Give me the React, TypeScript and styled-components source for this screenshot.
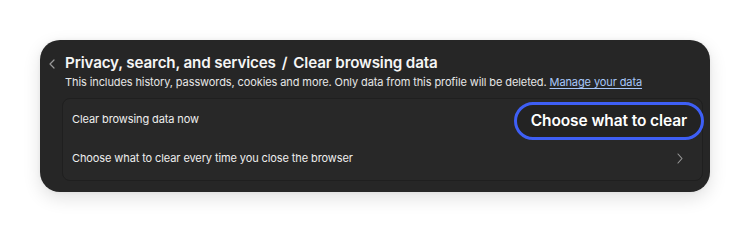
import React from 'react'
import styled, { createGlobalStyle } from 'styled-components'

const GlobalStyle = createGlobalStyle`
  html, body {
    margin: 0;
    padding: 0;
    background: #ffffff;
    font-family: Inter, "Liberation Sans", Arial, sans-serif;
    -webkit-font-smoothing: antialiased;
  }
`

const Page = styled.div`
  padding: 40px;
  width: 670px;
`

const Panel = styled.section`
  background: #262626;
  border-radius: 20px;
  height: 152px;
  box-sizing: border-box;
  padding: 13px 7px 0 8px;
  box-shadow: 0 6px 18px rgba(0, 0, 0, 0.12), 0 0 4px rgba(0, 0, 0, 0.05);
  color: #f2f2f2;
`

const Header = styled.div`
  display: flex;
  align-items: flex-start;
  gap: 9px;
`

const BackButton = styled.span`
  display: flex;
  align-items: center;
  justify-content: center;
  width: 8px;
  height: 20px;
  margin-top: 1px;
  color: #9a9a9a;
`

const HeaderText = styled.div`
  display: flex;
  flex-direction: column;
`

const Title = styled.h1`
  margin: 0;
  display: flex;
  gap: 6px;
  font-size: 15.2px;
  line-height: 20px;
  font-weight: 600;
  letter-spacing: -0.15px;
  color: #f5f5f5;
`

const Subtitle = styled.p`
  margin: 1px 0 0;
  font-size: 11px;
  line-height: 16px;
  letter-spacing: -0.1px;
  color: #e6e6e6;

  a {
    color: #a8c7fa;
    text-decoration: underline;
    text-underline-offset: 2px;
  }
`

const Card = styled.div`
  margin: 8px 0 0 14px;
  padding-bottom: 3px;
  background: #282828;
  border: 1px solid #1f1f1f;
  border-radius: 8px;
  display: flex;
  flex-direction: column;
`

const Row = styled.div<{ $height: number }>`
  display: flex;
  align-items: center;
  justify-content: space-between;
  height: ${(p) => p.$height}px;
  padding-left: 9px;
  font-size: 11px;
  letter-spacing: -0.1px;
  color: #eeeeee;
`

const ClearButton = styled.button`
  height: 38px;
  box-sizing: border-box;
  border: 3px solid #3e5ff5;
  border-radius: 19px;
  background: #232323;
  color: #ffffff;
  font-family: inherit;
  font-size: 15.5px;
  font-weight: 600;
  letter-spacing: -0.1px;
  padding: 0 14px;
  margin-right: -2px;
  margin-top: 3px;
`

const Chevron = styled.span`
  display: flex;
  margin-right: 19px;
  color: #9a9a9a;
`

export default function App() {
  return (
    <>
      <GlobalStyle />
      <Page>
        <Panel>
          <Header>
            <BackButton>
              <svg width="6" height="10" viewBox="0 0 6 10" fill="none">
                <path d="M5 1 L1 5 L5 9" stroke="currentColor" strokeWidth="1.2" strokeLinecap="round" strokeLinejoin="round" />
              </svg>
            </BackButton>
            <HeaderText>
              <Title>
                <span>Privacy, search, and services</span>
                <span>/</span>
                <span>Clear browsing data</span>
              </Title>
              <Subtitle>
                This includes history, passwords, cookies and more. Only data from this profile will be deleted.{' '}
                <a href="#">Manage your data</a>
              </Subtitle>
            </HeaderText>
          </Header>
          <Card>
            <Row $height={40}>
              <span>Clear browsing data now</span>
              <ClearButton>Choose what to clear</ClearButton>
            </Row>
            <Row $height={38}>
              <span>Choose what to clear every time you close the browser</span>
              <Chevron>
                <svg width="6" height="11" viewBox="0 0 6 11" fill="none">
                  <path d="M1 1 L5 5.5 L1 10" stroke="currentColor" strokeWidth="1.1" strokeLinecap="round" strokeLinejoin="round" />
                </svg>
              </Chevron>
            </Row>
          </Card>
        </Panel>
      </Page>
    </>
  )
}
